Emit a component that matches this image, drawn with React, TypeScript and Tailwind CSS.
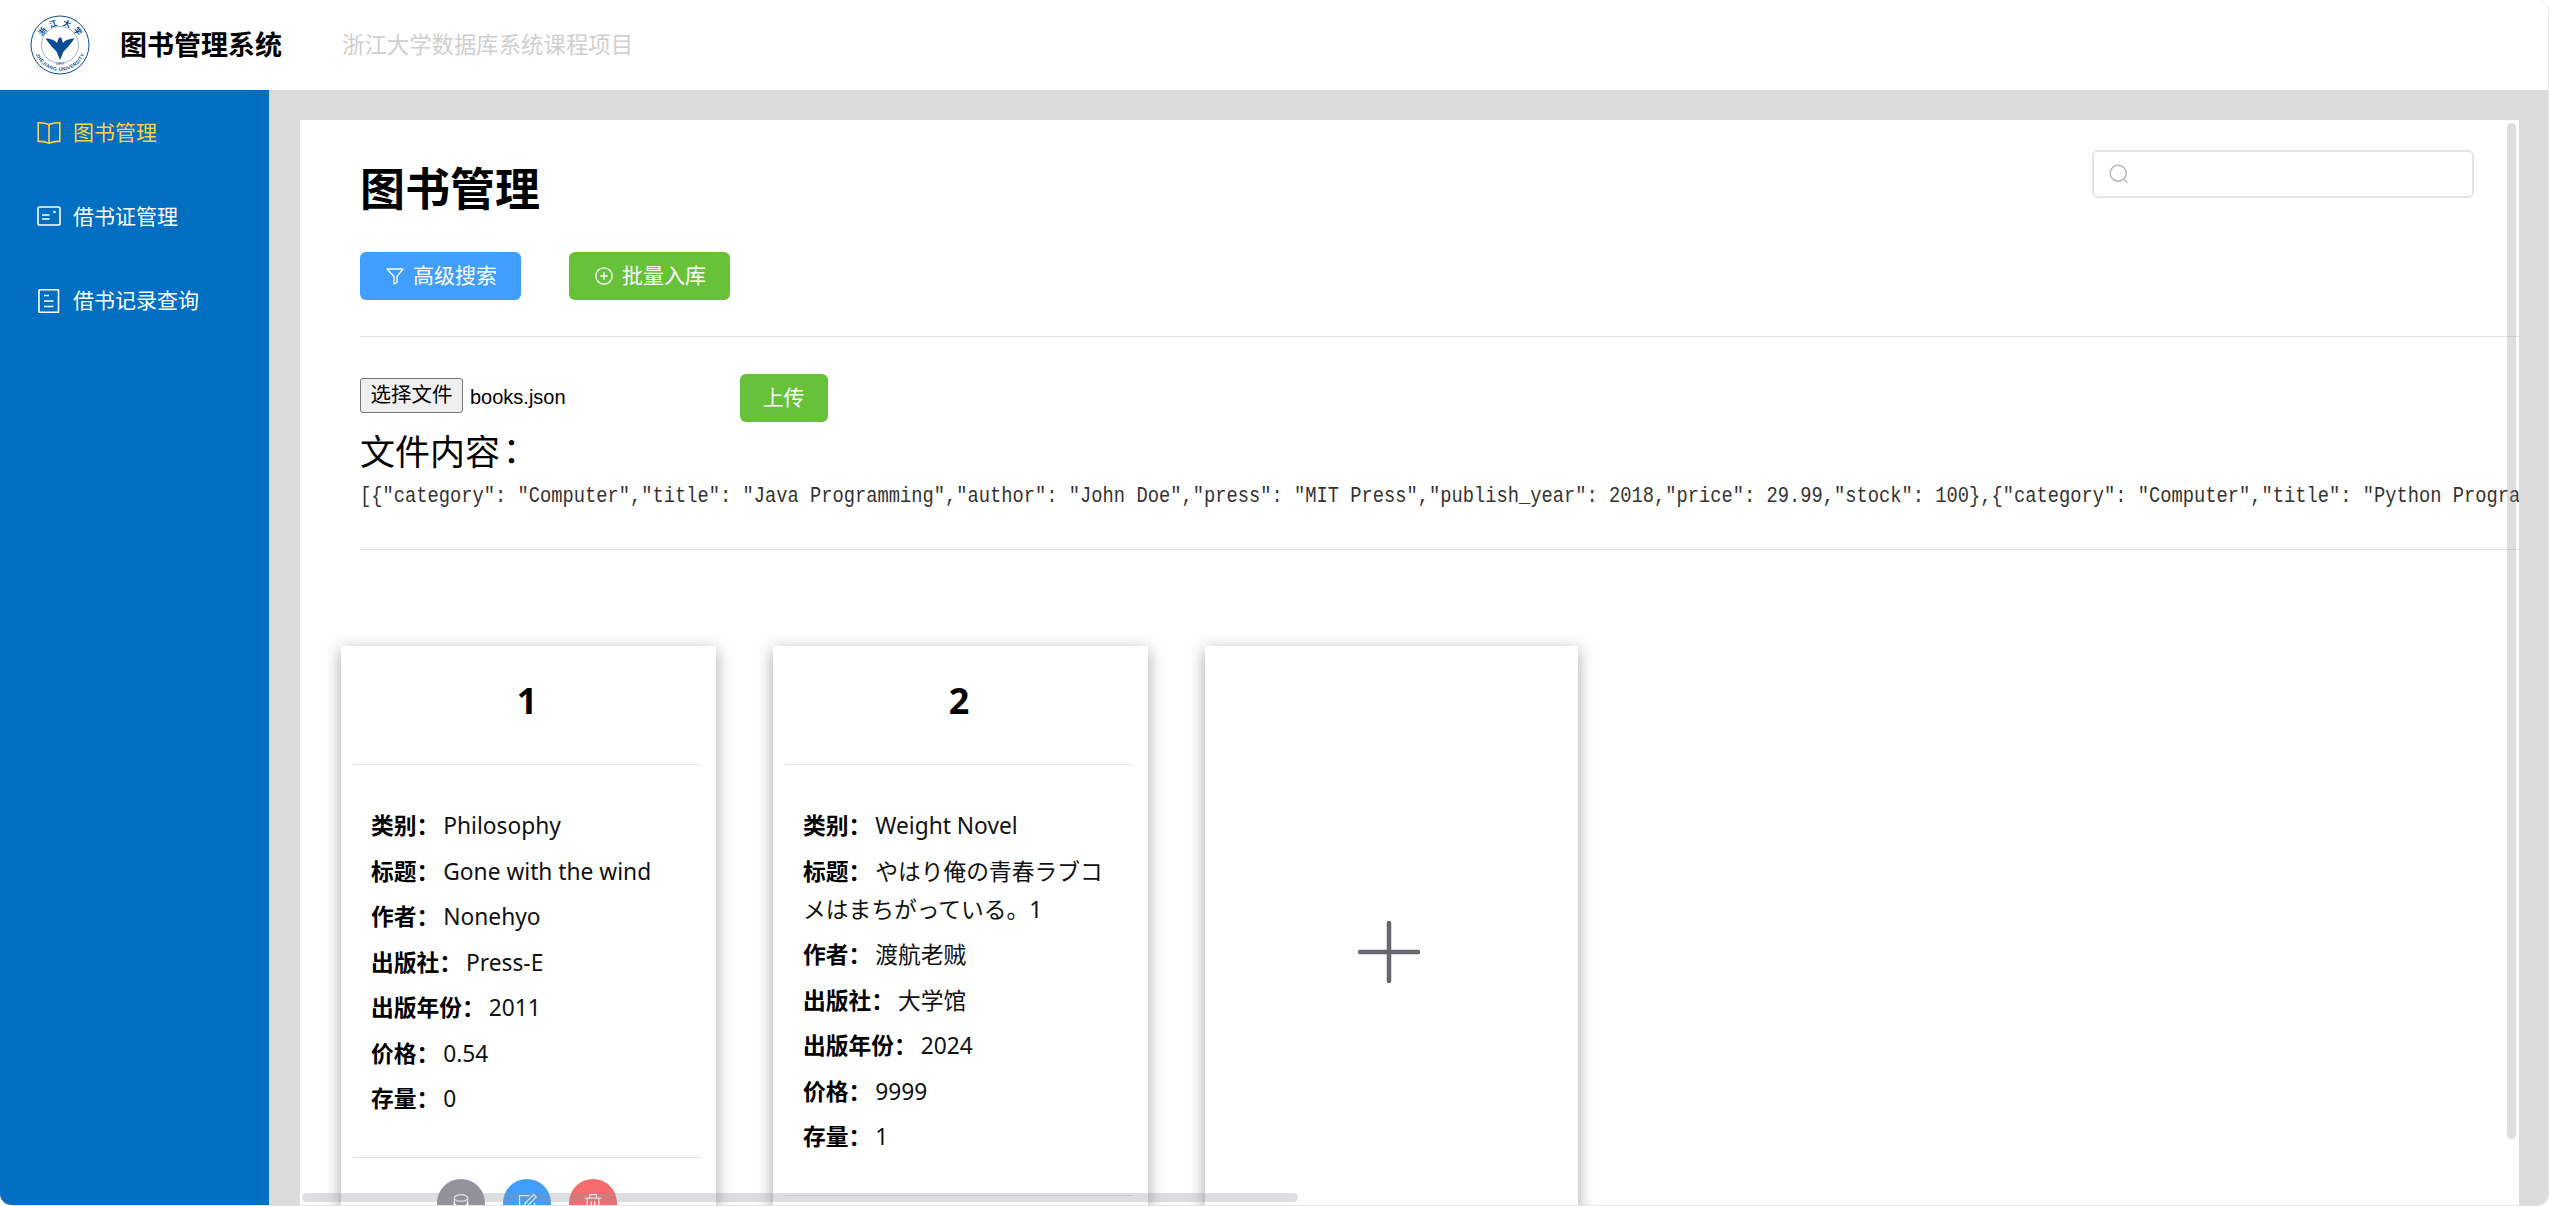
import React from "react";

const BookIcon = () => (
  <svg width="24" height="24" viewBox="0 0 24 24" fill="none" stroke="#ffd04b" strokeWidth="1.6" className="shrink-0">
    <path d="M12 3.5 C9 2.2 4.5 1.6 1.2 1.8 V20.4 C4.5 20.2 9 20.8 12 22.4 C15 20.8 19.5 20.2 22.8 20.4 V1.8 C19.5 1.6 15 2.2 12 3.5 Z" />
    <path d="M12 3.5 V22.4" />
  </svg>
);
const CardIcon = () => (
  <svg width="24" height="24" viewBox="0 0 24 24" fill="none" stroke="#fff" strokeWidth="1.6" className="shrink-0">
    <rect x="1" y="2" width="22" height="18" rx="1.8" />
    <path d="M5 10 H12.5 M5 14 H12.5" />
    <circle cx="17.5" cy="7" r="1.3" fill="#fff" stroke="none" />
  </svg>
);
const DocIcon = () => (
  <svg width="24" height="24" viewBox="0 0 24 24" fill="none" stroke="#fff" strokeWidth="1.6" className="shrink-0">
    <rect x="2" y="0.8" width="19.5" height="22.6" rx="0.6" />
    <path d="M7 6.5 H12 M7 12 H16.5 M7 17.5 H16.5" />
  </svg>
);
const FilterIcon = () => (
  <svg width="18" height="18" viewBox="0 0 18 18" fill="none" stroke="#fff" strokeWidth="1.3">
    <path d="M1 2 H17 L11 9.5 V15.5 L8 17 V9.5 Z" strokeLinejoin="round" />
  </svg>
);
const PlusCircleIcon = () => (
  <svg width="18" height="18" viewBox="0 0 18 18" fill="none" stroke="#fff" strokeWidth="1.3">
    <circle cx="9" cy="9" r="8.2" />
    <path d="M9 5.2 V12.8 M5.2 9 H12.8" />
  </svg>
);
const SearchIcon = () => (
  <svg width="20" height="20" viewBox="0 0 20 20" fill="none" stroke="#b4b6bd" strokeWidth="1.4">
    <circle cx="9.2" cy="9.2" r="8" />
    <path d="M14.8 15.2 L18.4 18.6" />
  </svg>
);
const StackIcon = () => (
  <svg width="20" height="20" viewBox="0 0 24 24" fill="none" stroke="#fff" strokeWidth="1.5">
    <ellipse cx="12" cy="6" rx="8" ry="4" />
    <path d="M4 6 V18 C4 20.2 7.6 22 12 22 C16.4 22 20 20.2 20 18 V6 M4 12 C4 14.2 7.6 16 12 16 C16.4 16 20 14.2 20 12" />
  </svg>
);
const EditIcon = () => (
  <svg width="20" height="20" viewBox="0 0 24 24" fill="none" stroke="#fff" strokeWidth="1.5">
    <path d="M15 3 H3 V22 H21 V12" />
    <path d="M9 16 L10 12 L20 2 L23 5 L13 15 Z" />
  </svg>
);
const TrashIcon = () => (
  <svg width="20" height="20" viewBox="0 0 24 24" fill="none" stroke="#fff" strokeWidth="1.5">
    <path d="M2 6 H22 M8 6 V2 H16 V6 M5 6 V22 H19 V6 M10 10 V18 M14 10 V18" />
  </svg>
);

const Logo = () => (
  <svg width="60" height="60" viewBox="0 0 60 60" className="shrink-0">
    <defs>
      <path id="bottomArc" d="M5 37 A26 26 0 0 0 55 37" />
    </defs>
    <circle cx="30" cy="30" r="29" fill="#fff" stroke="#0b4a94" strokeWidth="1" />
    <circle cx="30" cy="30" r="18.5" fill="none" stroke="#0b4a94" strokeWidth="0.4" />
    {[
      ["浙", -52],
      ["江", -18],
      ["大", 18],
      ["学", 52],
    ].map(([c, a]) => (
      <text
        key={c}
        x="30"
        y="10.5"
        textAnchor="middle"
        fontSize="8"
        fontWeight="700"
        fill="#0b4a94"
        fontFamily="'Noto Sans CJK SC', sans-serif"
        transform={`rotate(${a} 30 30)`}
      >
        {c}
      </text>
    ))}
    <text fontSize="4.8" fill="#0b4a94" fontFamily="'Liberation Sans', sans-serif" fontWeight="700" letterSpacing="0.4">
      <textPath href="#bottomArc" startOffset="4%">ZHEJIANG UNIVERSITY</textPath>
    </text>
    <path
      d="M15.5 23.5 C20 23.5 25 25 27 28 L28.5 23.5 L31 22 L32 25 L33 28 C35 25 40 23.5 44.5 23.5 L38 32 L33.5 36.5 L30 45 L26.5 36.5 L22 32 Z"
      fill="#0b4a94"
    />
    <text x="30" y="50" textAnchor="middle" fontSize="3.8" fill="#0b4a94" fontFamily="'Liberation Sans', sans-serif">1897</text>
  </svg>
);

const books = [
  {
    id: 1,
    rows: [
      ["类别", "Philosophy"],
      ["标题", "Gone with the wind"],
      ["作者", "Nonehyo"],
      ["出版社", "Press-E"],
      ["出版年份", "2011"],
      ["价格", "0.54"],
      ["存量", "0"],
    ],
  },
  {
    id: 2,
    rows: [
      ["类别", "Weight Novel"],
      ["标题", "やはり俺の青春ラブコメはまちがっている。1"],
      ["作者", "渡航老贼"],
      ["出版社", "大学馆"],
      ["出版年份", "2024"],
      ["价格", "9999"],
      ["存量", "1"],
    ],
  },
];

const json =
  '[{"category": "Computer","title": "Java Programming","author": "John Doe","press": "MIT Press","publish_year": 2018,"price": 29.99,"stock": 100},{"category": "Computer","title": "Python Programming","author": "Jane Smith","press": "O\'Reilly","publish_year": 2020,"price": 39.99,"stock": 50}]';

function Card({ id, rows }: { id: number; rows: string[][] }) {
  return (
    <div className="w-[375px] h-[1000px] shrink-0 bg-white shadow-[0_4px_16px_rgba(0,0,0,0.35)]">
      <div className="h-[118px] pb-[8px] pr-[3px] flex items-center justify-center text-[36px] font-bold text-black">{id}</div>
      <div className="h-px bg-[#e2e3e8] ml-[12px] mr-[15px]" />
      <div className="pt-[42.5px] pb-[31px] pl-[30px] pr-[30px] text-[22.75px] leading-[38px] text-[#111]">
        {rows.map(([k, v]) => (
          <p key={k} className="mb-[7.5px]">
            <span className="font-bold text-black">{k}：</span>
            <span className="ml-[4px]">{v}</span>
          </p>
        ))}
      </div>
      <div className="h-px bg-[#e2e3e8] ml-[12px] mr-[15px]" />
      <div className="pt-[21px] pl-[96px] flex gap-[18px]">
        <div className="w-[48px] h-[48px] rounded-full bg-[#909399] flex items-center justify-center"><StackIcon /></div>
        <div className="w-[48px] h-[48px] rounded-full bg-[#409eff] flex items-center justify-center"><EditIcon /></div>
        <div className="w-[48px] h-[48px] rounded-full bg-[#f56c6c] flex items-center justify-center"><TrashIcon /></div>
      </div>
    </div>
  );
}

export default function App() {
  const nav = [
    { icon: <BookIcon />, label: "图书管理", active: true },
    { icon: <CardIcon />, label: "借书证管理", active: false },
    { icon: <DocIcon />, label: "借书记录查询", active: false },
  ];
  return (
    <div className="h-screen w-full overflow-hidden bg-white font-['Noto_Sans','Noto_Sans_CJK_SC',sans-serif]">
      <div className="h-full flex flex-col overflow-hidden rounded-[12px] border-b border-r border-[#e4e4e4]">
        <header className="h-[90px] shrink-0 flex items-center bg-white pl-[30px]">
          <Logo />
          <span className="ml-[30px] text-[27px] font-bold text-black">图书管理系统</span>
          <span className="ml-[60px] text-[22.4px] text-[#cfcfcf]">浙江大学数据库系统课程项目</span>
        </header>
        <div className="flex-1 flex min-h-0">
          <aside className="w-[269px] shrink-0 bg-[#006fc1] pt-[1px]">
            {nav.map((n) => (
              <div key={n.label} className="h-[84px] flex items-center gap-[12px] pl-[37px]">
                {n.icon}
                <span className={`text-[21px] ${n.active ? "text-[#ffd04b]" : "text-white"}`}>{n.label}</span>
              </div>
            ))}
          </aside>
          <main className="flex-1 min-w-0 bg-[#dbdbdb] pt-[30px] pl-[31px] pr-[29px]">
            <div className="relative h-full bg-white overflow-hidden">
              <div className="pl-[60px]">
                <div className="flex justify-between items-start pr-[45px]">
                  <h1 className="mt-[39px] mb-[1px] text-[45px] leading-[60px] font-bold text-black">图书管理</h1>
                  <div className="mt-[30px] w-[382px] h-[48px] rounded-[6px] border-2 border-[#e4e5ec] flex items-center pl-[15px]">
                    <SearchIcon />
                  </div>
                </div>
                <div className="mt-[32px] flex gap-[48px]">
                  <button className="w-[161px] h-[48px] pl-[2px] rounded-[6px] bg-[#409eff] text-white text-[21px] flex items-center justify-center gap-[9px]">
                    <FilterIcon />高级搜索
                  </button>
                  <button className="w-[161px] h-[48px] pl-[2px] rounded-[6px] bg-[#67c23a] text-white text-[21px] flex items-center justify-center gap-[9px]">
                    <PlusCircleIcon />批量入库
                  </button>
                </div>
                <div className="mt-[36px] h-px bg-[#e2e3e8]" />
                <div className="mt-[37px] h-[48px] flex items-center font-['Liberation_Sans','Noto_Sans_CJK_SC',sans-serif]">
                  <button className="mb-[5px] w-[103px] h-[35px] border border-[#767676] rounded-[3px] bg-[#efefef] text-[20.5px] text-black leading-none">选择文件</button>
                  <span className="mb-[3px] ml-[7px] text-[20px] text-black">books.json</span>
                  <button className="ml-[174px] w-[88px] h-[48px] rounded-[6px] bg-[#67c23a] text-white text-[21px]">上传</button>
                </div>
                <div className="mt-[3px] text-[35px] leading-[50px] text-black">
                  文件内容<span className="ml-[-6px] font-['Noto_Sans_CJK_TC',sans-serif]">：</span>
                </div>
                <div className="mt-[1px] h-[36px] leading-[36px] whitespace-nowrap text-[18.75px] text-[#333] scale-y-[1.15] font-['Liberation_Mono',monospace]">{json}</div>
                <div className="mt-[34.5px] h-px bg-[#e2e3e8]" />
              </div>
              <div className="mt-[96px] pl-[41px] flex gap-[57px]">
                {books.map((b) => (
                  <Card key={b.id} id={b.id} rows={b.rows} />
                ))}
                <div className="w-[373px] h-[1000px] shrink-0 bg-white shadow-[0_4px_16px_rgba(0,0,0,0.35)] pt-[275px] pl-[153px]">
                  <svg width="62" height="62" viewBox="0 0 62 62" fill="none" stroke="#666a6e" strokeWidth="4.5" strokeLinecap="round">
                    <path d="M31 2 V60 M2 31 H60" />
                  </svg>
                </div>
              </div>
              <div className="absolute top-[3px] right-[3px] w-[9px] h-[1016px] rounded-full bg-[#909399]/30" />
              <div className="absolute bottom-[3px] left-[2px] w-[996px] h-[9px] rounded-full bg-[#909399]/30" />
            </div>
          </main>
        </div>
      </div>
    </div>
  );
}
